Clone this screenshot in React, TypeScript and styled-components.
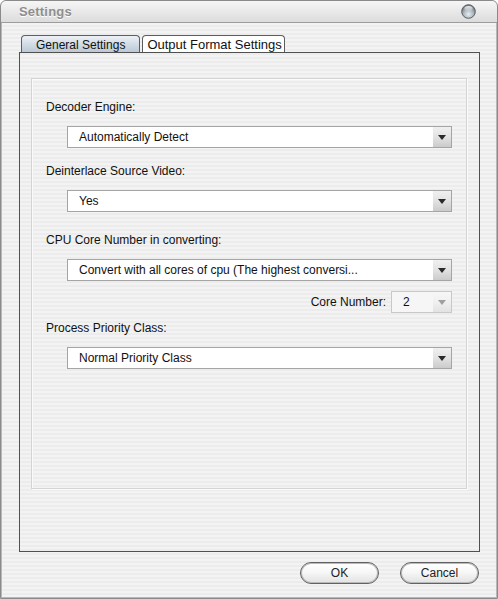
import React from 'react';
import styled, { createGlobalStyle } from 'styled-components';

const GlobalStyle = createGlobalStyle`
  html, body {
    margin: 0;
    padding: 0;
    background: #ffffff;
  }
  * {
    box-sizing: border-box;
  }
`;

const pinstripe = `repeating-linear-gradient(to bottom, #ececec 0px, #ececec 2px, #f3f3f3 2px, #f3f3f3 4px)`;

const Window = styled.div`
  width: 498px;
  height: 599px;
  border: 1px solid #8a8a8a;
  border-radius: 6px 6px 0 0;
  box-shadow: inset 1px 0 0 #b8b8b8, inset -1px 0 0 #b8b8b8, inset 0 -1px 0 #b8b8b8;
  background: ${pinstripe};
  display: flex;
  flex-direction: column;
  overflow: hidden;
  font-family: 'Liberation Sans', Arial, sans-serif;
  font-size: 12px;
  color: #111;
`;

const TitleBar = styled.div`
  height: 22px;
  flex: none;
  display: flex;
  align-items: center;
  justify-content: space-between;
  padding: 0 21px 0 18px;
  border-bottom: 1px solid #9c9c9c;
  background: linear-gradient(to bottom, #f6f6f6, #e6e6e6 60%, #dcdcdc);
  border-radius: 5px 5px 0 0;
`;

const Title = styled.span`
  font-weight: bold;
  font-size: 13px;
  color: #8e8e8e;
  text-shadow: 0 1px 0 #ffffff;
  letter-spacing: 0.2px;
`;

const Body = styled.div`
  flex: 1;
  display: flex;
  flex-direction: column;
  padding: 12px 17px 0 18px;
`;

const TabStrip = styled.div`
  display: flex;
  gap: 2px;
  height: 17px;
  padding-left: 2px;
`;

const Tab = styled.div<{ $active?: boolean }>`
  height: 18px;
  padding: 0 ${(p) => (p.$active ? '14px' : '2px')} 0 ${(p) => (p.$active ? '14px' : '4px')};
  border: 1px solid ${(p) => (p.$active ? '#55606c' : '#5c5c5c')};
  border-bottom: none;
  border-radius: 4px 4px 0 0;
  display: flex;
  align-items: center;
  line-height: 16px;
  font-size: ${(p) => (p.$active ? '12px' : '13px')};
  color: #111;
  background: ${(p) =>
    p.$active
      ? 'linear-gradient(to bottom, #eef2f6 0%, #d3dde7 45%, #b9c7d4 100%)'
      : '#ffffff'};
`;

const Panel = styled.div`
  height: 500px;
  border: 1px solid #505050;
  padding: 25px 12px 0 11px;
`;

const GroupBox = styled.div`
  height: 411px;
  border: 1px solid #d4d4d4;
  box-shadow: inset 1px 1px 0 #fafafa, 1px 1px 0 #fafafa;
  padding: 20px 14px 0 14px;
  display: flex;
  flex-direction: column;
`;

const Section = styled.div<{ $gap: number }>`
  margin-top: ${(p) => p.$gap}px;
  display: flex;
  flex-direction: column;
`;

const Label = styled.div`
  line-height: 16px;
  height: 16px;
  white-space: nowrap;
`;

const SelectBox = styled.div<{ $disabled?: boolean }>`
  height: 22px;
  margin-top: ${(p) => (p.$disabled ? '0' : '11px')};
  margin-left: ${(p) => (p.$disabled ? '0' : '21px')};
  width: ${(p) => (p.$disabled ? '61px' : 'auto')};
  border: 1px solid ${(p) => (p.$disabled ? '#c8c8c8' : '#a5a5a5')};
  background: ${(p) => (p.$disabled ? '#f6f6f6' : '#ffffff')};
  display: flex;
  align-items: stretch;
`;

const SelectText = styled.div`
  flex: 1;
  padding-left: 11px;
  display: flex;
  align-items: center;
  white-space: nowrap;
  overflow: hidden;
`;

const ArrowButton = styled.div<{ $disabled?: boolean }>`
  width: 18px;
  flex: none;
  display: flex;
  align-items: center;
  justify-content: center;
  background: ${(p) =>
    p.$disabled
      ? 'linear-gradient(to bottom, #f7f7f7, #efefef 55%, #e2e2e2)'
      : 'linear-gradient(to bottom, #f0f0f0, #e2e2e2 50%, #cbcbcb)'};
`;

const CoreRow = styled.div`
  margin-top: 10px;
  display: flex;
  justify-content: flex-end;
  align-items: center;
  gap: 5px;
`;

const Footer = styled.div`
  display: flex;
  justify-content: flex-end;
  gap: 21px;
  padding-top: 10px;
  padding-right: 1px;
`;

const PillButton = styled.div`
  width: 79px;
  height: 22px;
  border-radius: 11px;
  border: 1px solid #626262;
  box-shadow: inset 0 0 0 1px #b9b9b9;
  background: linear-gradient(to bottom, #ffffff 0%, #f7f7f7 45%, #e2e2e2 100%);
  display: flex;
  align-items: center;
  justify-content: center;
  color: #222;
`;

const Arrow = ({ disabled }: { disabled?: boolean }) => (
  <svg width="8" height="5" viewBox="0 0 8 5">
    <path d="M0 0H8L4 5Z" fill={disabled ? '#a0a0a0' : '#2a2a2a'} />
  </svg>
);

const CloseButton = () => (
  <svg width="15" height="15" viewBox="0 0 15 15">
    <defs>
      <radialGradient id="cb" cx="50%" cy="70%" r="60%">
        <stop offset="0%" stopColor="#e8eef2" />
        <stop offset="60%" stopColor="#aeb7be" />
        <stop offset="100%" stopColor="#6f777e" />
      </radialGradient>
      <linearGradient id="cbh" x1="0" y1="0" x2="0" y2="1">
        <stop offset="0%" stopColor="#ffffff" stopOpacity="0.9" />
        <stop offset="100%" stopColor="#ffffff" stopOpacity="0" />
      </linearGradient>
    </defs>
    <circle cx="7.5" cy="7.5" r="6.8" fill="url(#cb)" stroke="#5a5f63" strokeWidth="1" />
    <ellipse cx="7.5" cy="4.6" rx="4.2" ry="2.6" fill="url(#cbh)" />
  </svg>
);

const Select = ({ value }: { value: string }) => (
  <SelectBox>
    <SelectText>{value}</SelectText>
    <ArrowButton>
      <Arrow />
    </ArrowButton>
  </SelectBox>
);

export default function App() {
  return (
    <>
      <GlobalStyle />
      <Window>
        <TitleBar>
          <Title>Settings</Title>
          <CloseButton />
        </TitleBar>
        <Body>
          <TabStrip>
            <Tab $active>General Settings</Tab>
            <Tab>Output Format Settings</Tab>
          </TabStrip>
          <Panel>
            <GroupBox>
              <Section $gap={0}>
                <Label>Decoder Engine:</Label>
                <Select value="Automatically Detect" />
              </Section>
              <Section $gap={15}>
                <Label>Deinterlace Source Video:</Label>
                <Select value="Yes" />
              </Section>
              <Section $gap={20}>
                <Label>CPU Core Number in converting:</Label>
                <Select value="Convert with all cores of cpu (The highest conversi..." />
              </Section>
              <CoreRow>
                <span>Core Number:</span>
                <SelectBox $disabled>
                  <SelectText>2</SelectText>
                  <ArrowButton $disabled>
                    <Arrow disabled />
                  </ArrowButton>
                </SelectBox>
              </CoreRow>
              <Section $gap={7}>
                <Label>Process Priority Class:</Label>
                <Select value="Normal Priority Class" />
              </Section>
            </GroupBox>
          </Panel>
          <Footer>
            <PillButton>OK</PillButton>
            <PillButton>Cancel</PillButton>
          </Footer>
        </Body>
      </Window>
    </>
  );
}
